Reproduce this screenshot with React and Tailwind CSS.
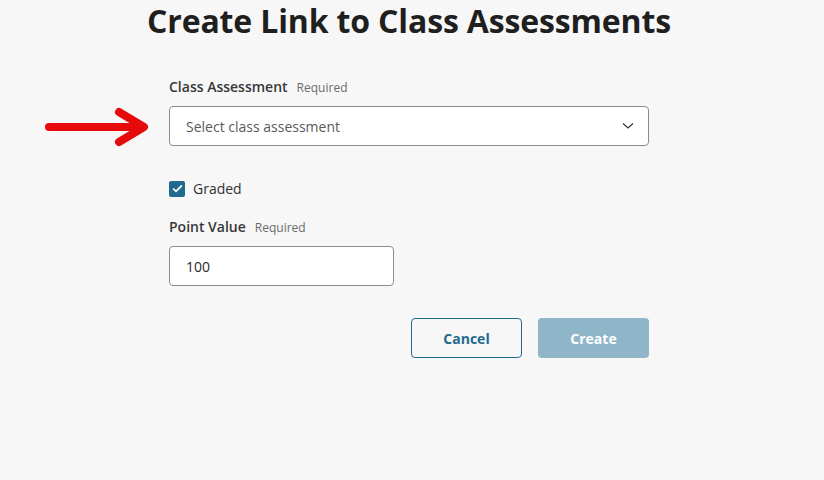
import React, { useState } from 'react';

const font = { fontFamily: '"Open Sans", "Noto Sans", sans-serif' };

const Label = ({ text }) => (
  <div className="flex items-baseline gap-[9px] h-5">
    <span className="text-[14px] font-semibold text-[#383838]">{text}</span>
    <span className="text-[12px] text-[#6b6b6b]">Required</span>
  </div>
);

const Arrow = () => (
  <svg width="112" height="40" viewBox="0 0 112 40" className="shrink-0">
    <g stroke="#e60a0a" strokeWidth="8" strokeLinecap="round" strokeLinejoin="round" fill="none">
      <line x1="10" y1="20" x2="100" y2="20" />
      <polyline points="80,5 105,20 80,35" />
    </g>
  </svg>
);

const App = () => {
  const [graded, setGraded] = useState(true);
  const [points, setPoints] = useState('100');

  return (
    <div className="w-[824px] h-[480px] bg-[#f7f7f7] overflow-hidden" style={font}>
      <h1 className="text-center text-[32px] leading-[40px] font-bold text-[#1f1f1f] pt-[1px] pr-[6px] tracking-[-0.15px]">
        Create Link to Class Assessments
      </h1>

      <div className="w-[480px] ml-[169px] mt-[35px]">
        <Label text="Class Assessment" />
        <div className="relative mt-[10px]">
          <div className="absolute right-full top-0 mr-[18px] mt-[1px]">
            <Arrow />
          </div>
          <button className="w-full h-[40px] bg-white border border-[#8c8c8c] rounded-[4px] flex items-center justify-between pl-[16px] pr-[14px]">
            <span className="text-[14px] text-[#5a5a5a]">Select class assessment</span>
            <svg width="12" height="8" viewBox="0 0 12 8">
              <path d="M1 1.5 L6 6 L11 1.5" stroke="#3a3a3a" strokeWidth="1.3" fill="none" />
            </svg>
          </button>
        </div>

        <label className="flex items-center gap-[8px] mt-[32px] cursor-pointer">
          <span
            onClick={() => setGraded(!graded)}
            className={`w-[16px] h-[16px] rounded-[2px] flex items-center justify-center ${graded ? 'bg-[#1f6a8e]' : 'bg-white border border-[#8c8c8c]'}`}
          >
            {graded && (
              <svg width="11" height="9" viewBox="0 0 11 9">
                <path d="M1.2 4.6 L4 7.3 L9.8 1.5" stroke="white" strokeWidth="1.8" fill="none" />
              </svg>
            )}
          </span>
          <span className="text-[14px] text-[#333]">Graded</span>
        </label>

        <div className="mt-[17px]">
          <Label text="Point Value" />
        </div>
        <input
          value={points}
          onChange={(e) => setPoints(e.target.value)}
          className="mt-[10px] w-[225px] h-[40px] bg-white border border-[#8c8c8c] rounded-[4px] px-[16px] text-[14px] text-[#2b2b2b] outline-none"
        />

        <div className="flex justify-end gap-[16px] mt-[32px]">
          <button className="w-[111px] h-[40px] border border-[#1f6a8e] rounded-[4px] text-[14px] font-bold text-[#1f6a8e] bg-transparent">
            Cancel
          </button>
          <button disabled className="w-[111px] h-[40px] rounded-[4px] text-[14px] font-bold text-white bg-[#8fb5c9]">
            Create
          </button>
        </div>
      </div>
    </div>
  );
};

export default App;
